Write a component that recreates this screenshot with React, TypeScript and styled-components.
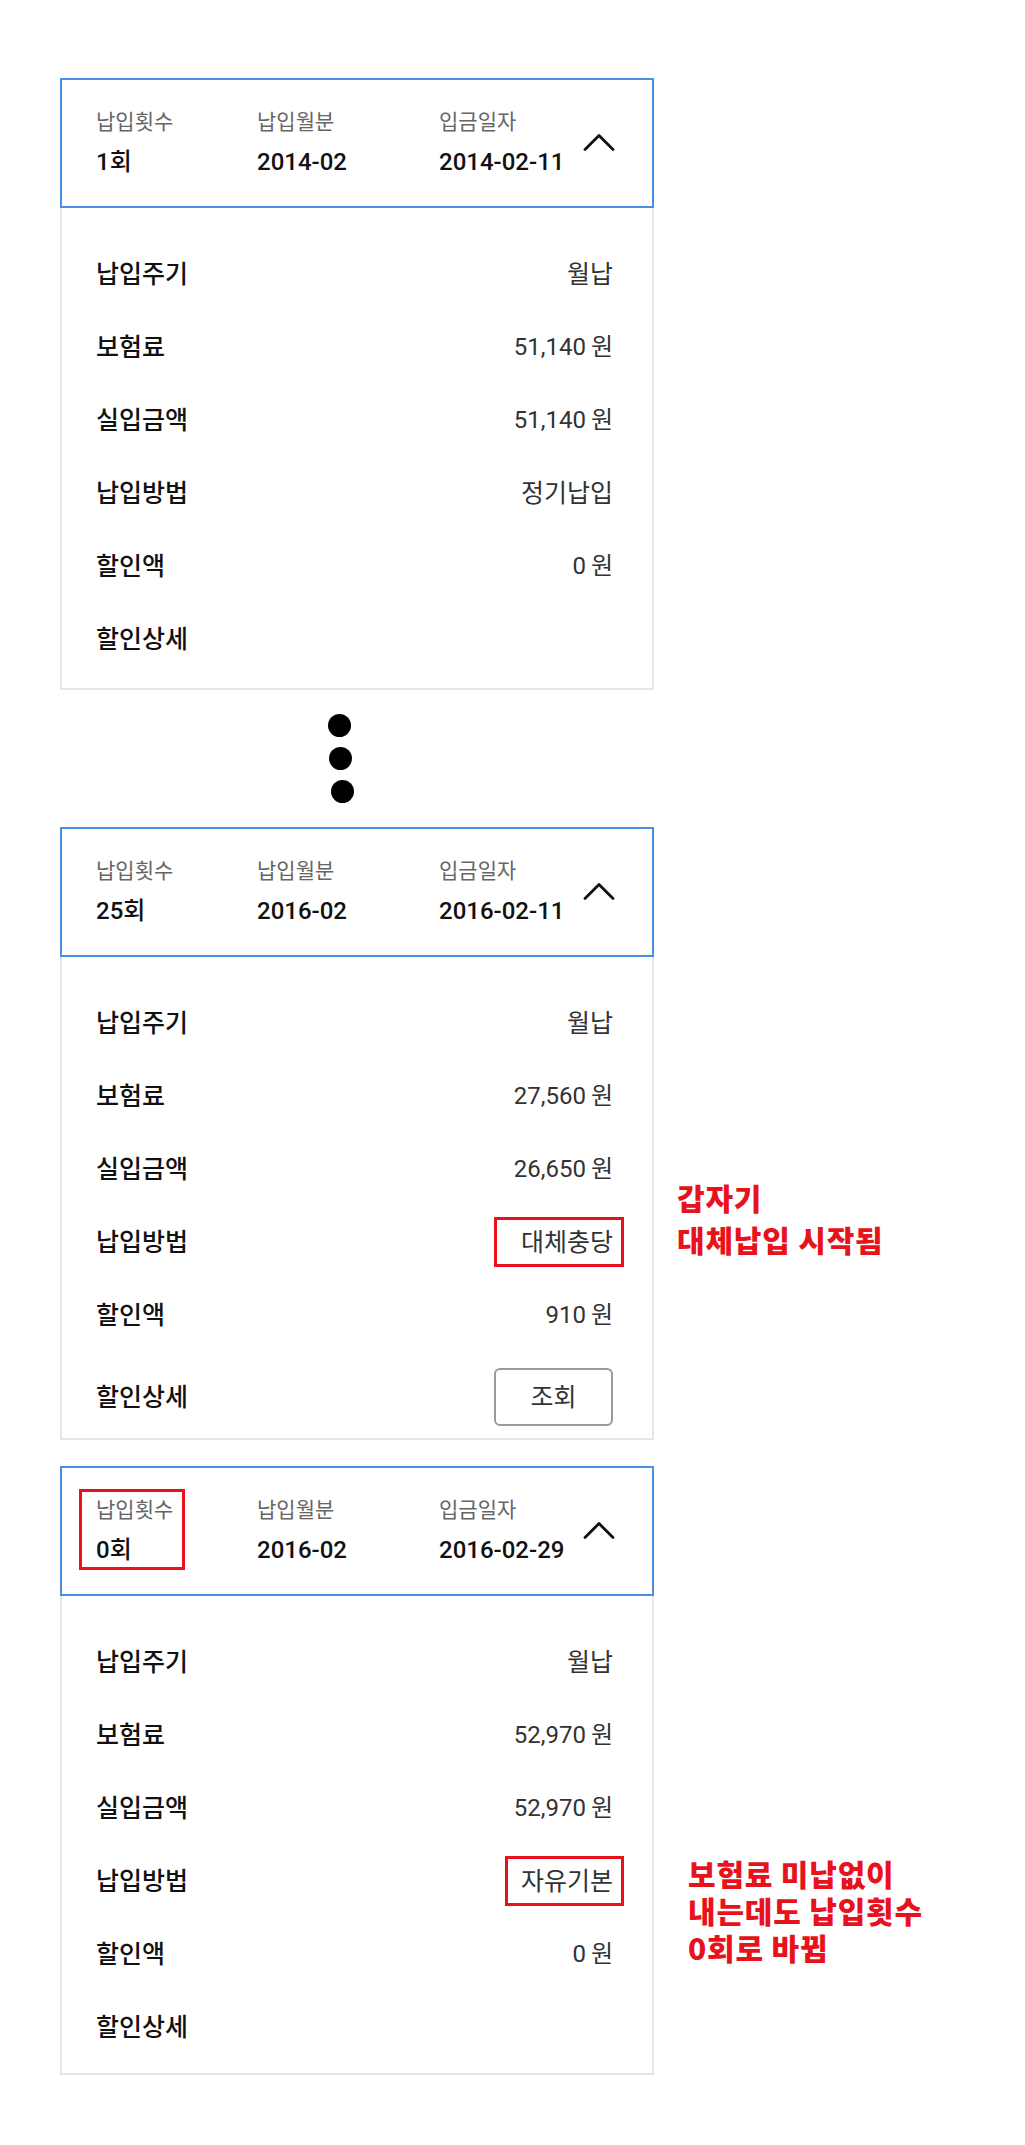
import React, { FC } from 'react';
import styled, { createGlobalStyle } from 'styled-components';

const GlobalStyle = createGlobalStyle`
	body {
		margin: 0;
		background: #fff;
		font-family: Roboto, "Noto Sans CJK KR", sans-serif;
		color: #111;
	}
`;

const Page = styled.div`
	box-sizing: border-box;
	min-height: 2145px;
	padding: 78px 0 72px 60px;
`;
const Section = styled.section<{ $gap?: number }>`
	display: flex;
	align-items: flex-start;
	margin-top: ${(p) => p.$gap ?? 0}px;
`;
const Card = styled.div`
	width: 594px;
	flex-shrink: 0;
`;
const Header = styled.div`
	box-sizing: border-box;
	height: 130px;
	display: flex;
	align-items: center;
	padding: 0 37px 0 34px;
	border: 2px solid #4a8fe3;
`;
const HeaderCol = styled.div<{ $width?: number; $marked?: boolean }>`
	position: relative;
	display: flex;
	flex-direction: column;
	gap: 12px;
	${(p) => (p.$width ? `width: ${p.$width}px; flex-shrink: 0;` : 'flex: 1;')}
	${(p) =>
		p.$marked &&
		`&::after {
			content: '';
			position: absolute;
			left: -17px;
			top: -8px;
			bottom: -5px;
			width: 100px;
			border: 3px solid #e8121c;
		}`}
`;
const HeaderLabel = styled.span`
	font-size: 21px;
	line-height: 26px;
	color: #666;
`;
const HeaderValue = styled.span`
	font-size: 24px;
	line-height: 30px;
	font-weight: 500;
	color: #111;
`;
const Toggle = styled.svg`
	width: 32px;
	height: 18px;
	flex-shrink: 0;
	margin-bottom: 2px;
`;
const Body = styled.div<{ $tail?: number }>`
	padding: 30px 39px ${(p) => p.$tail ?? 12}px 34px;
	border: 2px solid #e6e6e6;
	border-top: none;
`;
const Row = styled.div<{ $compact?: boolean }>`
	box-sizing: border-box;
	height: ${(p) => (p.$compact ? 74 : 73)}px;
	display: flex;
	align-items: center;
	justify-content: space-between;
	padding-top: ${(p) => (p.$compact ? 16 : 0)}px;
`;
const RowLabel = styled.span`
	font-size: 25px;
	line-height: 29px;
	font-weight: 500;
	color: #111;
`;
const RowValue = styled.span<{ $mark?: number }>`
	position: relative;
	display: flex;
	align-items: baseline;
	height: 29px;
	line-height: 29px;
	font-size: 24px;
	color: #333;
	${(p) =>
		p.$mark !== undefined &&
		`&::after {
			content: '';
			position: absolute;
			left: -${p.$mark}px;
			right: -11px;
			top: -11px;
			bottom: -10px;
			border: 3px solid #e8121c;
		}`}
`;
const Hangul = styled.span`
	font-size: 25px;
`;
const Unit = styled.span`
	margin-left: 5px;
`;
const LookupButton = styled.button`
	width: 119px;
	height: 58px;
	padding: 0;
	border: 2px solid #9a9a9a;
	border-radius: 6px;
	background: #fff;
	font-family: inherit;
	font-size: 25px;
	line-height: 29px;
	color: #333;
	cursor: pointer;
`;
const Dots = styled.div`
	display: flex;
	flex-direction: column;
	gap: 10px;
	padding: 24px 0 24px 268px;
`;
const Dot = styled.span<{ $shift: number }>`
	width: 23px;
	height: 23px;
	border-radius: 50%;
	background: #000;
	margin-left: ${(p) => p.$shift}px;
`;
const Note = styled.p<{ $top: number; $left: number; $lh: number }>`
	margin: ${(p) => p.$top}px 0 0 ${(p) => p.$left}px;
	font-family: "Noto Sans CJK KR", sans-serif;
	font-size: 30px;
	font-weight: 900;
	letter-spacing: 0.8px;
	line-height: ${(p) => p.$lh}px;
	color: #e8121c;
	white-space: nowrap;
`;

type Detail = {
	cycle: string;
	premium: string;
	paid: string;
	method: string;
	discount: string;
	lookup?: boolean;
	methodMark?: number;
};

type Payment = {
	count: string;
	month: string;
	date: string;
	countMarked?: boolean;
	tail?: number;
	detail: Detail;
};

const payments: Payment[] = [
	{
		count: '1회',
		month: '2014-02',
		date: '2014-02-11',
		detail: {
			cycle: '월납',
			premium: '51,140',
			paid: '51,140',
			method: '정기납입',
			discount: '0',
		},
	},
	{
		count: '25회',
		month: '2016-02',
		date: '2016-02-11',
		detail: {
			cycle: '월납',
			premium: '27,560',
			paid: '26,650',
			method: '대체충당',
			discount: '910',
			lookup: true,
			methodMark: 27,
		},
	},
	{
		count: '0회',
		month: '2016-02',
		date: '2016-02-29',
		countMarked: true,
		tail: 9,
		detail: {
			cycle: '월납',
			premium: '52,970',
			paid: '52,970',
			method: '자유기본',
			discount: '0',
			methodMark: 16,
		},
	},
];

const Won: FC<{ amount: string }> = ({ amount }) => (
	<RowValue>
		{amount}
		<Unit>원</Unit>
	</RowValue>
);

const PaymentCard: FC<{ item: Payment }> = ({ item }) => {
	const d = item.detail;
	return (
		<Card>
			<Header>
				<HeaderCol $width={161} $marked={item.countMarked}>
					<HeaderLabel>납입횟수</HeaderLabel>
					<HeaderValue>{item.count}</HeaderValue>
				</HeaderCol>
				<HeaderCol $width={182}>
					<HeaderLabel>납입월분</HeaderLabel>
					<HeaderValue>{item.month}</HeaderValue>
				</HeaderCol>
				<HeaderCol>
					<HeaderLabel>입금일자</HeaderLabel>
					<HeaderValue>{item.date}</HeaderValue>
				</HeaderCol>
				<Toggle viewBox="0 0 32 18" fill="none">
					<polyline
						points="2,16.5 16,2.5 30,16.5"
						stroke="#111"
						strokeWidth="2.8"
						strokeLinecap="round"
						strokeLinejoin="round"
					/>
				</Toggle>
			</Header>
			<Body $tail={item.tail}>
				<Row>
					<RowLabel>납입주기</RowLabel>
					<RowValue>
						<Hangul>{d.cycle}</Hangul>
					</RowValue>
				</Row>
				<Row>
					<RowLabel>보험료</RowLabel>
					<Won amount={d.premium} />
				</Row>
				<Row>
					<RowLabel>실입금액</RowLabel>
					<Won amount={d.paid} />
				</Row>
				<Row>
					<RowLabel>납입방법</RowLabel>
					<RowValue $mark={d.methodMark}>
						<Hangul>{d.method}</Hangul>
					</RowValue>
				</Row>
				<Row>
					<RowLabel>할인액</RowLabel>
					<Won amount={d.discount} />
				</Row>
				<Row $compact={d.lookup}>
					<RowLabel>할인상세</RowLabel>
					{d.lookup && <LookupButton>조회</LookupButton>}
				</Row>
			</Body>
		</Card>
	);
};

const App: FC = () => {
	return (
		<Page>
			<GlobalStyle />
			<Section>
				<PaymentCard item={payments[0]} />
			</Section>
			<Dots>
				<Dot $shift={0} />
				<Dot $shift={1} />
				<Dot $shift={3} />
			</Dots>
			<Section>
				<PaymentCard item={payments[1]} />
				<Note $top={349} $left={23} $lh={42}>
					갑자기
					<br />
					대체납입 시작됨
				</Note>
			</Section>
			<Section $gap={26}>
				<PaymentCard item={payments[2]} />
				<Note $top={389} $left={34} $lh={37}>
					보험료 미납없이
					<br />
					내는데도 납입횟수
					<br />
					0회로 바뀜
				</Note>
			</Section>
		</Page>
	);
};

export default App;
